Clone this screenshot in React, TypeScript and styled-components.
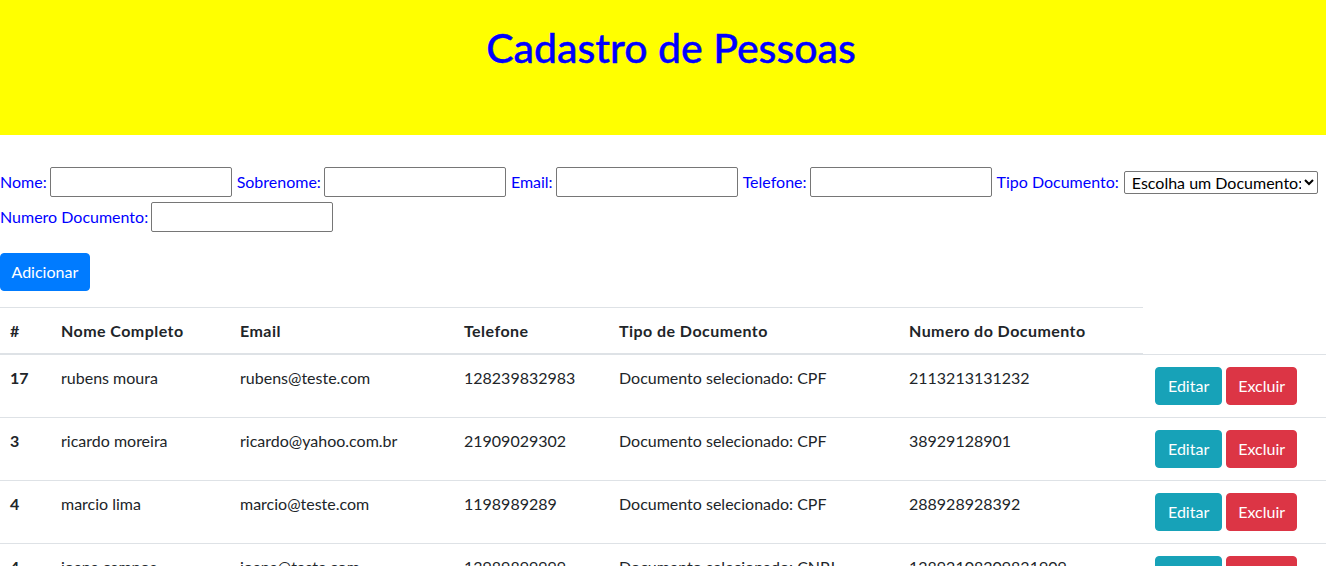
import React from "react";
import styled, { createGlobalStyle } from "styled-components";

const GlobalStyle = createGlobalStyle`
  html, body { margin: 0; padding: 0; background: #fff; }
  body {
    font-family: Lato, "Noto Sans", sans-serif;
    font-size: 16px;
    line-height: 1.5;
    color: #212529;
  }
  *, *::before, *::after { box-sizing: border-box; }
`;

const Header = styled.header`
  background: #ffff00;
  height: 135px;
  padding: 23px 0 0 16px;
  text-align: center;
`;

const Title = styled.h1`
  margin: 0;
  font-family: Lato, sans-serif;
  font-size: 41px;
  font-weight: 500;
  line-height: 1.2;
  color: #0000ff;
  -webkit-text-stroke: 0.4px #0000ff;
`;

const Form = styled.form`
  display: flex;
  flex-wrap: wrap;
  align-items: center;
  row-gap: 5px;
  margin-top: 32px;
`;

const Field = styled.div`
  display: flex;
  align-items: center;
  gap: 3px;
  margin-right: 5px;
`;

const Label = styled.label`
  color: #0000ff;
  font-size: 16px;
  white-space: nowrap;
`;

const Input = styled.input`
  width: 182px;
  height: 30px;
  border: 1px solid #767676;
  border-radius: 2px;
  padding: 1px 4px;
  font: inherit;
  background: #fff;
`;

const Select = styled.select`
  width: 194px;
  height: 23px;
  border: 1px solid #767676;
  border-radius: 2px;
  background: #fff;
  font-family: Lato, sans-serif;
  font-size: 16px;
  line-height: 1;
  color: #000;
  padding: 0 0 0 3px;
  margin-left: 2px;
`;

const ButtonBar = styled.div`
  margin-top: 21px;
  margin-bottom: 16px;
`;

const colors = { primary: "#007bff", info: "#17a2b8", danger: "#dc3545" };

const Btn = styled.button<{ $variant: "primary" | "info" | "danger" }>`
  display: inline-block;
  font-family: Lato, sans-serif;
  font-size: 16px;
  line-height: 24px;
  padding: 6px ${(p) => (p.$variant === "info" ? 12 : p.$variant === "danger" ? 11 : 10.5)}px;
  border-radius: 4px;
  border: 1px solid ${(p) => colors[p.$variant]};
  background: ${(p) => colors[p.$variant]};
  color: #fff;
  cursor: pointer;
`;

const Actions = styled.div`
  display: flex;
  gap: 4px;
`;

const Table = styled.table`
  width: 100%;
  border-collapse: collapse;
  table-layout: fixed;
  color: #212529;
`;

const Th = styled.th<{ $first?: boolean }>`
  text-align: left;
  font-weight: 700;
  letter-spacing: 0.45px;
  padding: 11px 12px 10px ${(p) => (p.$first ? 10 : 12)}px;
  vertical-align: bottom;
  border-top: 1px solid #dee2e6;
  border-bottom: 2px solid #dee2e6;
  white-space: nowrap;
`;

const Td = styled.td<{ $bold?: boolean }>`
  padding: 12px 12px 12px ${(p) => (p.$bold ? 10 : 12)}px;
  vertical-align: top;
  border-top: 1px solid #dee2e6;
  font-weight: ${(p) => (p.$bold ? 700 : 400)};
  white-space: nowrap;
`;

const CellText = styled.div`
  margin-top: -1px;
`;

const people = [
  { id: 17, nome: "rubens moura", email: "rubens@teste.com", tel: "128239832983", tipo: "CPF", doc: "2113213131232" },
  { id: 3, nome: "ricardo moreira", email: "ricardo@yahoo.com.br", tel: "21909029302", tipo: "CPF", doc: "38929128901" },
  { id: 4, nome: "marcio lima", email: "marcio@teste.com", tel: "1198989289", tipo: "CPF", doc: "288928928392" },
  { id: 4, nome: "joana campos", email: "joana@teste.com", tel: "13989899999", tipo: "CNPJ", doc: "12892108209831909" },
];

const widths = [49, 179, 224, 155, 290, 246];

export default function App() {
  return (
    <>
      <GlobalStyle />
      <Header>
        <Title>Cadastro de Pessoas</Title>
      </Header>
      <Form onSubmit={(e) => e.preventDefault()}>
        <Field>
          <Label>Nome:</Label>
          <Input />
        </Field>
        <Field>
          <Label>Sobrenome:</Label>
          <Input />
        </Field>
        <Field>
          <Label>Email:</Label>
          <Input />
        </Field>
        <Field>
          <Label>Telefone:</Label>
          <Input />
        </Field>
        <Field>
          <Label>Tipo Documento:</Label>
          <Select defaultValue="">
            <option value="">Escolha um Documento:</option>
            <option value="CPF">CPF</option>
            <option value="CNPJ">CNPJ</option>
          </Select>
        </Field>
        <Field>
          <Label>Numero Documento:</Label>
          <Input />
        </Field>
      </Form>
      <ButtonBar>
        <Btn $variant="primary" type="button">Adicionar</Btn>
      </ButtonBar>
      <Table>
        <colgroup>
          {widths.map((w, i) => (
            <col key={i} style={{ width: w }} />
          ))}
          <col />
        </colgroup>
        <thead>
          <tr>
            <Th $first>#</Th>
            <Th>Nome Completo</Th>
            <Th>Email</Th>
            <Th>Telefone</Th>
            <Th>Tipo de Documento</Th>
            <Th>Numero do Documento</Th>
          </tr>
        </thead>
        <tbody>
          {people.map((p, i) => (
            <tr key={i}>
              <Td $bold><CellText>{p.id}</CellText></Td>
              <Td><CellText>{p.nome}</CellText></Td>
              <Td><CellText>{p.email}</CellText></Td>
              <Td><CellText>{p.tel}</CellText></Td>
              <Td><CellText>Documento selecionado: {p.tipo}</CellText></Td>
              <Td><CellText>{p.doc}</CellText></Td>
              <Td>
                <Actions>
                  <Btn $variant="info" type="button">Editar</Btn>
                  <Btn $variant="danger" type="button">Excluir</Btn>
                </Actions>
              </Td>
            </tr>
          ))}
        </tbody>
      </Table>
    </>
  );
}
